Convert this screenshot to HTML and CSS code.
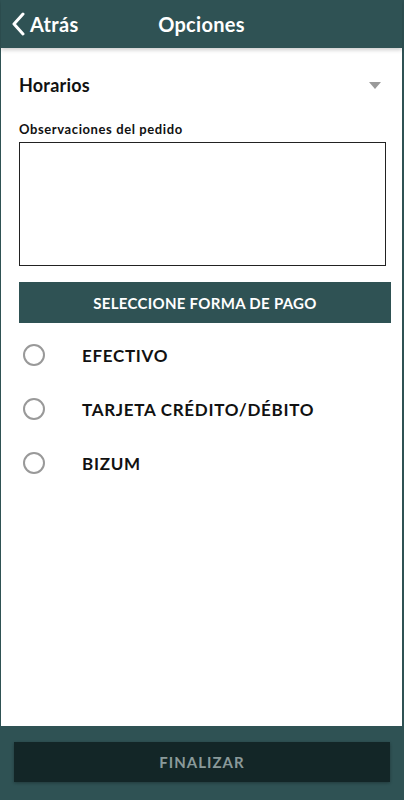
FILE: index.html
```html
<!DOCTYPE html>
<html lang="es">

<head>
    <meta charset="UTF-8">
    <meta name="viewport" content="width=device-width, initial-scale=1.0">
    <title>Opciones</title>
    <link rel="stylesheet" href="styles.css">
</head>

<body>
    <div class="app">
        <header class="topbar">
            <a class="back" href="#">
                <svg width="14" height="24" viewBox="0 0 14 24">
                    <path d="M11 2 L2 12 L11 22" fill="none" stroke="#fff" stroke-width="3" stroke-linecap="round" stroke-linejoin="round" />
                </svg>
                <span>Atrás</span>
            </a>
            <h1>Opciones</h1>
        </header>

        <main class="content">
            <div class="select-row">
                <span>Horarios</span>
                <span class="caret"></span>
            </div>

            <label class="field-label" for="obs">Observaciones del pedido</label>
            <textarea id="obs" class="notes"></textarea>

            <div class="section-bar">SELECCIONE FORMA DE PAGO</div>

            <ul class="pay-list">
                <li class="pay-item"><span class="radio"></span>EFECTIVO</li>
                <li class="pay-item"><span class="radio"></span>TARJETA CRÉDITO/DÉBITO</li>
                <li class="pay-item"><span class="radio"></span>BIZUM</li>
            </ul>
        </main>

        <footer class="bottombar">
            <button class="finish">FINALIZAR</button>
        </footer>
    </div>
</body>

</html>
```

FILE: styles.css
```css
body {
    margin: 0;
    padding: 0;
    font-family: 'Lato', 'Noto Sans', sans-serif;
    background-color: #fff;
    color: #111;
}

.app {
    height: 800px;
    display: flex;
    flex-direction: column;
    border-left: 1px solid #2f5254;
    border-right: 2px solid #2f5254;
    box-sizing: border-box;
}

.topbar {
    height: 48px;
    background-color: #2f5254;
    display: flex;
    align-items: center;
    position: relative;
    box-shadow: 0 2px 4px rgba(0, 0, 0, 0.2);
}

.back {
    display: flex;
    align-items: center;
    gap: 4px;
    padding-left: 11px;
    color: #fff;
    text-decoration: none;
    font-size: 20px;
    font-weight: 700;
    letter-spacing: 0.3px;
}

.topbar h1 {
    margin: 0;
    color: #fff;
    font-size: 20px;
    font-weight: 700;
    letter-spacing: 0.3px;
    position: absolute;
    left: 0;
    right: 0;
    text-align: center;
    pointer-events: none;
}

.content {
    flex: 1;
    padding: 0 11px 0 18px;
}

.select-row {
    display: flex;
    justify-content: space-between;
    align-items: center;
    height: 34px;
    margin-top: 20px;
    font-size: 18px;
    font-weight: 700;
    letter-spacing: 0.2px;
    padding-right: 10px;
}

.caret {
    width: 0;
    height: 0;
    border-left: 6px solid transparent;
    border-right: 6px solid transparent;
    border-top: 7px solid #9a9a9a;
}

.field-label {
    display: block;
    margin-top: 19px;
    font-size: 13px;
    font-weight: 700;
    letter-spacing: 0.6px;
}

.notes {
    display: block;
    width: 367px;
    height: 124px;
    margin-top: 5px;
    border: 1px solid #222;
    box-sizing: border-box;
    resize: none;
}

.section-bar {
    margin-top: 16px;
    height: 41px;
    background-color: #2f5254;
    color: #fff;
    font-size: 15px;
    font-weight: 700;
    letter-spacing: 0.3px;
    display: flex;
    align-items: center;
    justify-content: center;
}

.pay-list {
    list-style: none;
    margin: 5px 0 0;
    padding: 0;
}

.pay-item {
    height: 54px;
    display: flex;
    align-items: center;
    font-size: 17px;
    font-weight: 700;
    letter-spacing: 0.7px;
}

.radio {
    width: 18px;
    height: 18px;
    border: 2px solid #999;
    border-radius: 50%;
    margin-left: 4px;
    margin-right: 37px;
}

.bottombar {
    height: 74px;
    background-color: #2f5254;
    padding: 16px 12px 0 13px;
    box-sizing: border-box;
}

.finish {
    width: 100%;
    height: 40px;
    border: none;
    background-color: #132627;
    color: #8a9a9a;
    font-family: 'Lato', 'Noto Sans', sans-serif;
    font-size: 15px;
    font-weight: 700;
    letter-spacing: 1px;
    box-shadow: 0 1px 3px rgba(0, 0, 0, 0.3);
}
```
